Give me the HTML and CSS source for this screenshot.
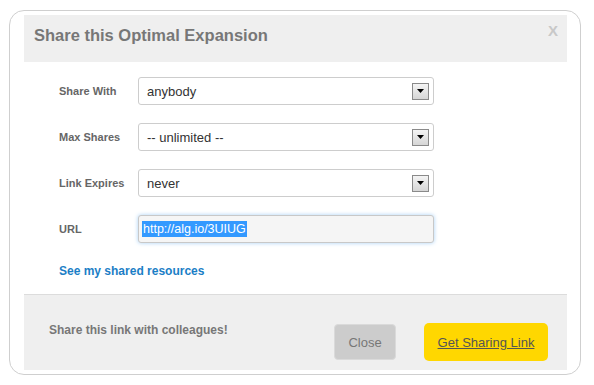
FILE: index.html
```html
<!DOCTYPE html>
<html>
<head>
<meta charset="utf-8">
<link rel="stylesheet" href="styles.css">
</head>
<body>
<div class="frame">
  <div class="dialog">
    <div class="header">
      <h1 class="title">Share this Optimal Expansion</h1>
      <span class="close-x">X</span>
    </div>
    <div class="content">
      <div class="form">
        <label class="label">Share With</label>
        <div class="select"><span class="value">anybody</span><span class="arrow"><svg width="7" height="4" viewBox="0 0 7 4"><path d="M0 0H7L3.5 4Z" fill="#000"/></svg></span></div>
        <label class="label">Max Shares</label>
        <div class="select"><span class="value">-- unlimited --</span><span class="arrow"><svg width="7" height="4" viewBox="0 0 7 4"><path d="M0 0H7L3.5 4Z" fill="#000"/></svg></span></div>
        <label class="label">Link Expires</label>
        <div class="select"><span class="value">never</span><span class="arrow"><svg width="7" height="4" viewBox="0 0 7 4"><path d="M0 0H7L3.5 4Z" fill="#000"/></svg></span></div>
        <label class="label">URL</label>
        <div class="url"><span class="selected">http://alg.io/3UIUG</span></div>
      </div>
      <a class="link" href="#">See my shared resources</a>
    </div>
    <div class="footer">
      <span class="footer-text">Share this link with colleagues!</span>
      <div class="buttons">
        <button class="btn btn-close">Close</button>
        <button class="btn btn-primary">Get Sharing Link</button>
      </div>
    </div>
  </div>
</div>
</body>
</html>
```
FILE: styles.css
```css
html, body {
  margin: 0;
  padding: 0;
  background: #fff;
}
body {
  font-family: "Liberation Sans", Arial, sans-serif;
}
.frame {
  margin: 10px 0 0 9px;
  border: 1px solid #cfcfcf;
  border-radius: 15px;
  padding: 4px 13px 4px 14px;
  box-sizing: content-box;
  width: 543px;
  height: 355px;
}
.dialog {
  display: flex;
  flex-direction: column;
  height: 100%;
}
.header {
  background: #efefef;
  height: 47px;
  display: flex;
  justify-content: space-between;
  align-items: flex-start;
  padding: 0 10px 0 10px;
}
.title {
  margin: 11px 0 0 0;
  font-size: 16.5px;
  font-weight: bold;
  color: #777;
}
.close-x {
  margin-top: 7px;
  margin-right: -1px;
  font-size: 15px;
  font-weight: bold;
  color: #c8c8c8;
}
.content {
  flex: 1;
  padding: 15px 0 0 35px;
  background: #fff;
}
.form {
  display: grid;
  grid-template-columns: 79px 296px;
  grid-auto-rows: 28px;
  row-gap: 18px;
  align-items: center;
}
.label {
  font-size: 11px;
  font-weight: bold;
  color: #666;
}
.select {
  height: 28px;
  box-sizing: border-box;
  border: 1px solid #cdcdcd;
  border-radius: 3px;
  display: flex;
  align-items: center;
  justify-content: space-between;
  padding: 0 4px 0 8px;
  background: #fff;
}
.value {
  font-size: 13px;
  color: #333;
}
.arrow {
  width: 15px;
  height: 15px;
  border: 1px solid #8a8a8a;
  background: linear-gradient(#f4f4f4, #d6d6d6);
  display: flex;
  align-items: center;
  justify-content: center;
}
.url {
  height: 28px;
  box-sizing: border-box;
  border: 1px solid #c8c8c8;
  border-radius: 3px;
  background: #f5f5f5;
  box-shadow: 0 0 4px #a8d0f5;
  display: flex;
  align-items: center;
  padding: 0 3px;
}
.selected {
  background: #3399ff;
  color: #fff;
  font-size: 12.5px;
  line-height: 16px;
  padding: 0 1px;
}
.link {
  display: inline-block;
  margin-top: 21px;
  font-size: 12px;
  font-weight: bold;
  color: #1b7ec6;
  text-decoration: none;
}
.footer {
  border-top: 1px solid #dcdcdc;
  background: #efefef;
  height: 75px;
  display: flex;
  align-items: flex-start;
  justify-content: space-between;
  padding: 0 19px 0 25px;
}
.footer-text {
  font-size: 12px;
  font-weight: bold;
  color: #777;
  margin-top: 28px;
}
.buttons {
  display: flex;
  gap: 28px;
  align-items: center;
  margin-top: 28px;
}
.btn {
  font-family: "Liberation Sans", Arial, sans-serif;
  font-size: 13px;
  border: none;
  cursor: pointer;
}
.btn-close {
  width: 62px;
  height: 36px;
  background: #cccccc;
  border: 1px solid #dadada;
  border-radius: 4px;
  color: #777;
}
.btn-primary {
  width: 124px;
  height: 38px;
  background: #ffd700;
  border-radius: 5px;
  color: #555;
  text-decoration: underline;
}
```
